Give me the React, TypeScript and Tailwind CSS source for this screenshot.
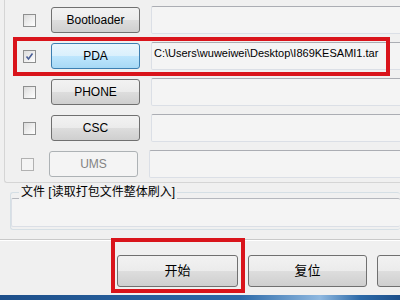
import React from 'react';

const btnBase =
  'flex items-center justify-center rounded-[3px] border text-[12px] shrink-0';
const btnNormal =
  'border-[#707070] bg-[linear-gradient(to_bottom,#f2f2f2_0%,#ebebeb_50%,#dddddd_51%,#cfcfcf_100%)] text-black';
const btnHot =
  'border-[#3c7fb1] bg-[linear-gradient(to_bottom,#eaf6fd_0%,#d9f0fc_50%,#bee6fd_51%,#a7d9f5_100%)] text-black';
const btnOff = 'border-[#adb2b5] bg-[#f4f4f4] text-[#838383]';

const field =
  'h-[28px] flex-1 -mr-[10px] rounded-[2px] border border-[#dbdfe6] border-t-[#abadb3] bg-[#f4f4f4]';

type Row = { label: string; checked?: boolean; hot?: boolean; disabled?: boolean; path?: string };

const rows: Row[] = [
  { label: 'Bootloader' },
  { label: 'PDA', checked: true, hot: true, path: 'C:\\Users\\wuweiwei\\Desktop\\I869KESAMI1.tar' },
  { label: 'PHONE' },
  { label: 'CSC' },
  { label: 'UMS', disabled: true },
];

const CheckBox = ({ checked, disabled }: { checked?: boolean; disabled?: boolean }) => (
  <div
    className={`relative h-[13px] w-[13px] shrink-0 border ${
      disabled
        ? 'border-[#b1b1b1] bg-[#f4f4f4]'
        : 'border-[#8e8f8f] bg-[linear-gradient(135deg,#dcdcdc_0%,#ffffff_100%)]'
    }`}
  >
    {checked && (
      <svg viewBox="0 0 11 11" className="absolute inset-0 h-[11px] w-[11px]">
        <path d="M2.5 5.5 L4.5 8 L8.5 2.5" fill="none" stroke="#4a5f97" strokeWidth="1.6" />
      </svg>
    )}
  </div>
);

export default function App() {
  return (
    <div className="relative h-[300px] w-[400px] overflow-hidden bg-[#f0f0f0] font-['Liberation_Sans','Noto_Sans_CJK_SC',sans-serif] text-[12px] text-black">
      {/* file rows */}
      <div className="ml-[4px] h-[183px] rounded-bl-[3px] border-b border-l border-[#d5d5d5] pt-[2px]">
        {rows.map((r) => (
          <div key={r.label} className="flex h-[36px] items-center">
            <div className={r.disabled ? 'ml-[16px]' : 'ml-[18px]'}>
              <CheckBox checked={r.checked} disabled={r.disabled} />
            </div>
            <div
              className={`${btnBase} ${r.hot ? btnHot : r.disabled ? btnOff : btnNormal} ml-[15px] h-[26px] w-[89px]`}
            >
              {r.label}
            </div>
            <div className={`${field} ml-[11px] -mt-[1px] whitespace-nowrap px-[2px] pt-[2px] text-[11px] leading-[16px]`}>
              {r.path}
            </div>
          </div>
        ))}
      </div>

      {/* package file group */}
      <div className="relative ml-[10px] mt-[9px] h-[38px] rounded-[3px] border border-r-0 border-[#d5dfe5] pt-[5px]">
        <span className="absolute -top-[8px] left-[8px] bg-[#f0f0f0] px-[2px] leading-[14px]">
          文件 [读取打包文件整体刷入]
        </span>
        <div className="h-[29px] rounded-[2px] border border-r-0 border-[#dbdfe6] border-t-[#b5b7bd] bg-[#f4f4f4]" />
      </div>

      {/* separator */}
      <div className="mt-[9px] border-t border-[#c9c9c9]" />
      <div className="border-t border-white" />

      {/* action buttons */}
      <div className="mt-[14px] flex gap-[10px] pl-[117px]">
        <div className={`${btnBase} ${btnNormal} h-[32px] w-[121px] text-[13px]`}>开始</div>
        <div className={`${btnBase} ${btnNormal} h-[32px] w-[119px] text-[13px]`}>复位</div>
        <div className={`${btnBase} ${btnNormal} h-[32px] w-[119px]`} />
      </div>

      {/* taskbar strip */}
      <div className="mt-[8px] h-[6px] bg-[linear-gradient(to_right,#1d4f8a_0%,#2d6aa8_60%,#8fb8e0_80%,#2d6aa8_90%,#1d4f8a_100%)]" />

      {/* red highlight boxes */}
      <div className="pointer-events-none absolute left-[13px] top-[37px] h-[39px] w-[377px] border-4 border-[#d9141b]" />
      <div className="pointer-events-none absolute left-[111px] top-[238px] h-[55px] w-[134px] border-4 border-[#d9141b]" />
    </div>
  );
}
